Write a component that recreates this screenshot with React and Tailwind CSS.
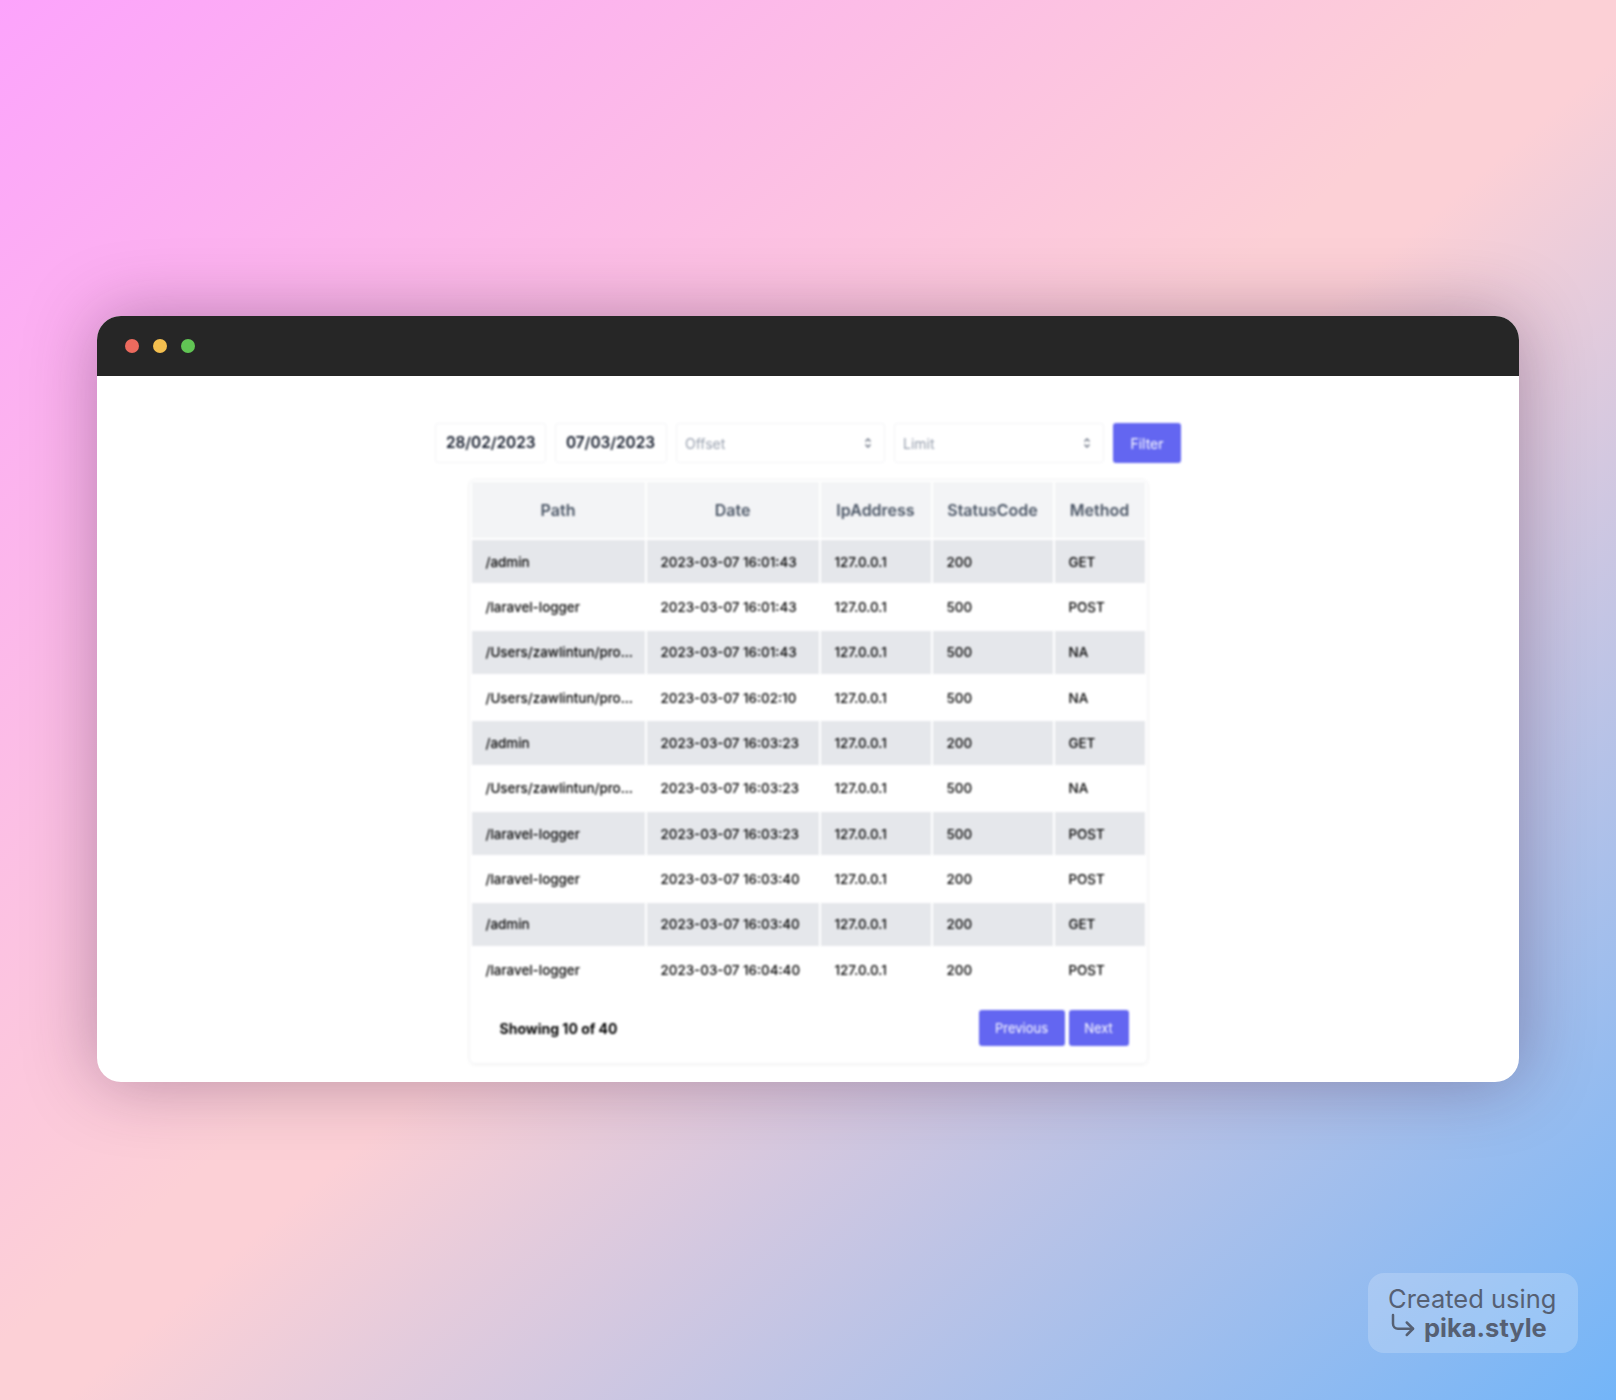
import { CornerDownRight } from "lucide-react";

const rows = [
  ["/admin", "2023-03-07 16:01:43", "127.0.0.1", "200", "GET"],
  ["/laravel-logger", "2023-03-07 16:01:43", "127.0.0.1", "500", "POST"],
  ["/Users/zawlintun/pro...", "2023-03-07 16:01:43", "127.0.0.1", "500", "NA"],
  ["/Users/zawlintun/pro...", "2023-03-07 16:02:10", "127.0.0.1", "500", "NA"],
  ["/admin", "2023-03-07 16:03:23", "127.0.0.1", "200", "GET"],
  ["/Users/zawlintun/pro...", "2023-03-07 16:03:23", "127.0.0.1", "500", "NA"],
  ["/laravel-logger", "2023-03-07 16:03:23", "127.0.0.1", "500", "POST"],
  ["/laravel-logger", "2023-03-07 16:03:40", "127.0.0.1", "200", "POST"],
  ["/admin", "2023-03-07 16:03:40", "127.0.0.1", "200", "GET"],
  ["/laravel-logger", "2023-03-07 16:04:40", "127.0.0.1", "200", "POST"],
];

const columns = [
  { label: "Path", width: "w-[173px]" },
  { label: "Date", width: "w-[172px]" },
  { label: "IpAddress", width: "w-[110px]" },
  { label: "StatusCode", width: "w-[120px]" },
  { label: "Method", width: "w-[90px]" },
];

// little up/down arrows of a number input
const Spinner = () => (
  <svg width="8" height="12" viewBox="0 0 8 12" className="text-gray-500">
    <path d="M1.5 4.5 L4 2 L6.5 4.5" fill="none" stroke="currentColor" strokeWidth="1.4" />
    <path d="M1.5 7.5 L4 10 L6.5 7.5" fill="none" stroke="currentColor" strokeWidth="1.4" />
  </svg>
);

const App = () => {
  return (
    <div className="relative min-h-[1400px] w-full overflow-hidden bg-[linear-gradient(to_bottom_right,#fca3fc_0%,#fcd0d6_48%,#fcd0d6_52%,#73b5f8_100%)] font-['Inter',sans-serif]">
      {/* Window */}
      <div className="pt-[316px] pl-[97px]">
        <div className="w-[1422px] overflow-hidden rounded-[24px] bg-white shadow-[0_0_70px_rgba(60,20,60,0.35)]">
          {/* Title bar */}
          <div className="flex h-[60px] items-center gap-[14px] bg-[#262626] pl-[28px]">
            <span className="h-[14px] w-[14px] rounded-full bg-[#ec6a5e]" />
            <span className="h-[14px] w-[14px] rounded-full bg-[#f4bf4f]" />
            <span className="h-[14px] w-[14px] rounded-full bg-[#61c554]" />
          </div>

          {/* Page content */}
          <div className="flex h-[706px] flex-col items-center pt-[47px] blur-[1px]">
            {/* Filters */}
            <div className="flex gap-[9px]">
              <div className="flex h-[40px] w-[111px] items-center rounded-[3px] border border-gray-100 pl-[10px] text-[15.3px] font-semibold text-gray-900">
                28/02/2023
              </div>
              <div className="flex h-[40px] w-[112px] items-center rounded-[3px] border border-gray-100 pl-[10px] text-[15.3px] font-semibold text-gray-900">
                07/03/2023
              </div>
              <div className="flex h-[40px] w-[209px] items-center justify-between rounded-[3px] border border-gray-100 pl-[8px] pr-[12px] text-[14px] text-gray-400">
                Offset
                <Spinner />
              </div>
              <div className="flex h-[40px] w-[210px] items-center justify-between rounded-[3px] border border-gray-100 pl-[8px] pr-[12px] text-[14px] text-gray-400">
                Limit
                <Spinner />
              </div>
              <button className="h-[40px] w-[68px] rounded-[3px] bg-[#6366f1] text-[14px] text-white">
                Filter
              </button>
            </div>

            {/* Table card */}
            <div className="mt-[16px] w-[679px] rounded-[6px] border border-gray-100 shadow-[0_1px_4px_rgba(0,0,0,0.05)]">
              <table className="w-full table-fixed border-separate border-spacing-[2px] text-[13.4px] font-medium text-black">
                <thead>
                  <tr>
                    {columns.map((col) => (
                      <th
                        key={col.label}
                        className={`${col.width} h-[56px] bg-gray-100 text-center text-[16px] font-semibold text-gray-600`}
                      >
                        {col.label}
                      </th>
                    ))}
                  </tr>
                </thead>
                <tbody>
                  {rows.map((row, index) => (
                    <tr key={index} className={index % 2 === 0 ? "bg-gray-200" : "bg-white"}>
                      {row.map((cell, i) => (
                        <td key={i} className="h-[43.35px] overflow-hidden whitespace-nowrap pl-[14px] pr-[4px] text-left">
                          {cell}
                        </td>
                      ))}
                    </tr>
                  ))}
                </tbody>
              </table>

              {/* Pagination */}
              <div className="flex items-center justify-between pt-[17px] pb-[17px] pl-[30px] pr-[18px]">
                <span className="text-[14px] font-bold text-black">Showing 10 of 40</span>
                <div className="flex gap-[4px]">
                  <button className="h-[36px] w-[86px] rounded-[3px] bg-[#6366f1] text-[13px] text-white">
                    Previous
                  </button>
                  <button className="h-[36px] w-[60px] rounded-[3px] bg-[#6366f1] text-[13px] text-white">
                    Next
                  </button>
                </div>
              </div>
            </div>
          </div>
        </div>
      </div>

      {/* Watermark */}
      <div className="absolute right-[38px] bottom-[47px] flex h-[80px] w-[210px] flex-col justify-center rounded-[16px] bg-white/20 pl-[20px] text-[#566073]">
        <div className="text-[25.5px] leading-[28px]">Created using</div>
        <div className="flex items-center gap-[6px] text-[25.5px] font-bold leading-[29px]">
          <CornerDownRight size={30} strokeWidth={2} className="-mt-[4px]" />
          pika.style
        </div>
      </div>
    </div>
  );
};

export default App;
